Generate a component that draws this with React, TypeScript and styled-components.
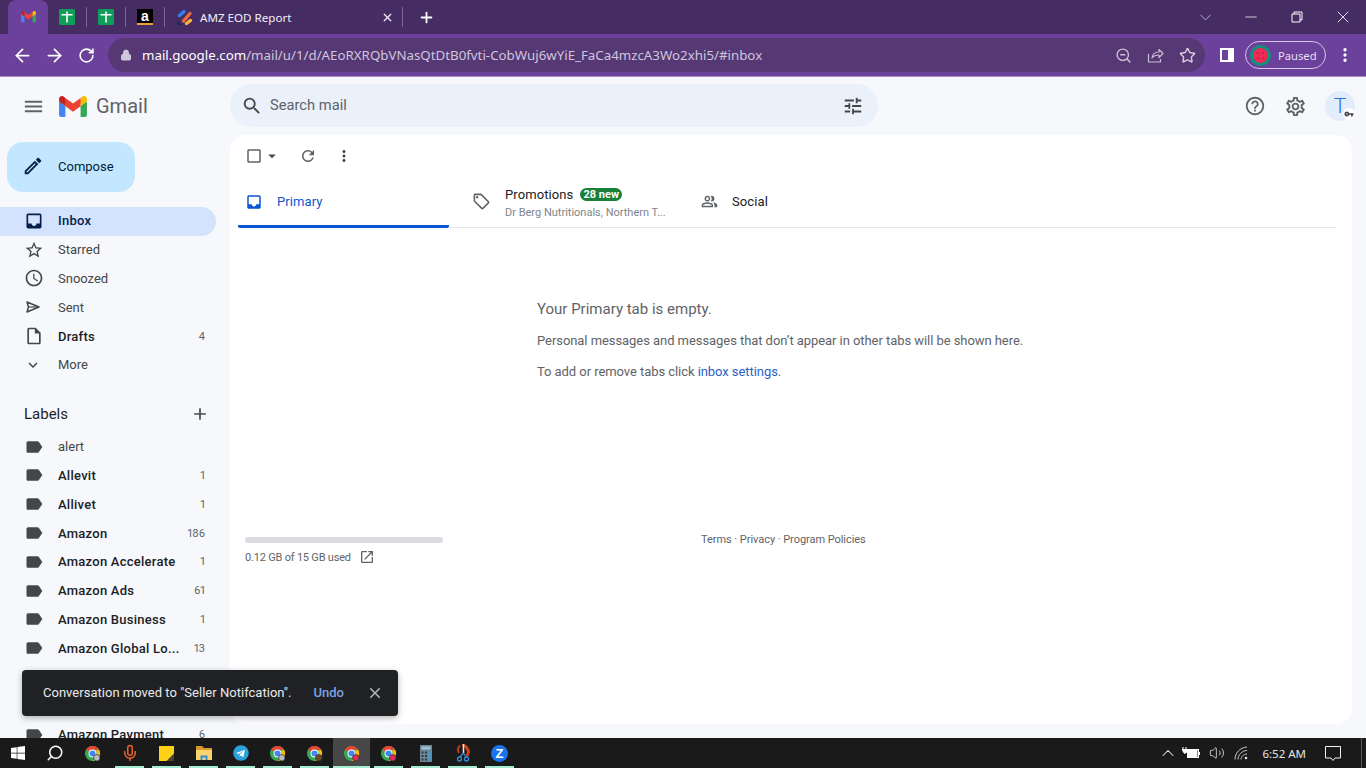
import React from 'react';
import styled, { createGlobalStyle } from 'styled-components';
import {
	MdMenu, MdSearch, MdTune, MdHelpOutline, MdOutlineSettings, MdOutlineEdit, MdInbox, MdOutlineStarBorder,
	MdAccessTime, MdOutlineInsertDriveFile, MdExpandMore, MdLabel, MdAdd, MdOutlineCheckBoxOutlineBlank,
	MdArrowDropDown, MdRefresh, MdMoreVert, MdOutlineLocalOffer, MdOutlinePeopleAlt, MdOpenInNew, MdClose, MdVpnKey,
} from 'react-icons/md';
import { FaWindows, FaTelegram } from 'react-icons/fa';
import {
	ArrowLeft, ArrowRight, RotateCw, Lock, ZoomOut, Star, ChevronDown, Minus, X, Plus, Search, Mic,
	ChevronUp, Volume2, EllipsisVertical,
} from 'lucide-react';

const GlobalStyle = createGlobalStyle`
	html, body { margin: 0; padding: 0; height: 100%; overflow: hidden; }
	* { box-sizing: border-box; }
	body { font-family: Roboto, "Liberation Sans", sans-serif; }
`;

const ZoomBadge = styled.div`
	width: 17px;
	height: 17px;
	border-radius: 50%;
	background: #1a73f0;
	color: #fff;
	font: 700 13px/17px "Liberation Sans", sans-serif;
	text-align: center;
`;

const TelegramBadge = styled.span`
	display: flex;
	border-radius: 50%;
	background: radial-gradient(circle, #fff 60%, transparent 62%);
`;

const GmailLogo = ({ size }: { size: number }) => (
	<svg width={size} height={size * 0.75} viewBox="0 0 256 193">
		<path fill="#4285F4" d="M58.182 192.05V93.14L27.507 65.077 0 49.504v125.091c0 9.658 7.825 17.455 17.455 17.455h40.727Z" />
		<path fill="#34A853" d="M197.818 192.05h40.727c9.659 0 17.455-7.826 17.455-17.455V49.505l-31.156 17.837-27.026 25.798v98.91Z" />
		<path fill="#EA4335" d="m58.182 93.14-4.174-38.647 4.174-36.989L128 69.868l69.818-52.364 4.669 34.992-4.669 40.644L128 145.504z" />
		<path fill="#FBBC04" d="M197.818 17.504V93.14L256 49.504V26.231c0-21.585-24.64-33.89-41.89-20.945l-16.292 12.218Z" />
		<path fill="#C5221F" d="M0 49.504l26.759 20.07L58.182 93.14V17.504L41.89 5.286C24.61-7.66 0 4.646 0 26.23v23.273Z" />
	</svg>
);

const SheetIcon = () => (
	<svg width="16" height="16" viewBox="0 0 16 16">
		<rect width="16" height="16" rx="1.5" fill="#0f9d58" />
		<path d="M7.200 2.500h1.600V5h4.700v1.400H8.800v7.100H7.200V6.400H2.500V5h4.700z" fill="#fff" />
	</svg>
);

const AmzIcon = () => (
	<svg width="17" height="17" viewBox="0 0 17 17" fill="none" strokeLinecap="round" strokeWidth="3.4">
		<path d="M3.500 6.500L8 2.500" stroke="#2f80ed" />
		<path d="M7.500 12L14 4.500" stroke="#ef6b3b" />
		<path d="M10.500 14.500L14.500 11.500" stroke="#f5b63f" />
		<path d="M1 11l5 5H1z" fill="#1e2a5a" />
	</svg>
);

const ShareIcon = () => (
	<svg width="17" height="17" viewBox="0 0 17 17" fill="none" stroke="#c9bfd6" strokeWidth="1.200">
		<path d="M1.500 7v8h12v-3" />
		<path d="M5 11c.5-4 3.500-6 7-6V2.500L16 6.500 12 10.500V8c-3 0-5.500 1-7 3z" strokeLinejoin="round" />
	</svg>
);

const ChromeIcon = ({ badge }: { badge?: string }) => (
	<svg width="17" height="17" viewBox="0 0 18 18">
		<circle cx="9" cy="9" r="8" fill="#34a853" />
		<path d="M9 1a8 8 0 0 1 7 4H9a4 4 0 0 0-3.600 2.200L2.200 5A8 8 0 0 1 9 1z" fill="#ea4335" />
		<path d="M16 5a8 8 0 0 1-6.600 12l3-5.200A4 4 0 0 0 12.400 6z" fill="#fbbc04" />
		<circle cx="9" cy="9" r="4.200" fill="#fff" />
		<circle cx="9" cy="9" r="3.200" fill="#4285f4" />
		{badge && <circle cx="13.500" cy="13.500" r="3.400" fill={badge} stroke="#333" strokeWidth="0.8" />}
	</svg>
);

const StickyIcon = () => (
	<svg width="15" height="15" viewBox="0 0 15 15">
		<path d="M0 0h15v15H0z" fill="#fcd116" />
		<path d="M15 7.500V15H7.500z" fill="#4c4230" />
	</svg>
);

const FolderIcon = () => (
	<svg width="18" height="16" viewBox="0 0 18 16">
		<path d="M1 1h6l2 2h8v3H1z" fill="#d9982a" />
		<path d="M1 5h16v10H1z" fill="#fcd36a" />
		<path d="M5.500 15v-4.500h7V15h-2v-2.500h-3V15z" fill="#2f8fdc" />
	</svg>
);

const CalcIcon = () => (
	<svg width="12" height="17" viewBox="0 0 12 17">
		<rect width="12" height="17" fill="#6e8595" />
		<rect x="1.500" y="1.500" width="9" height="3" fill="#9fc3d6" />
		<path d="M1.500 6.500h2v2h-2zM5 6.500h2v2H5zM1.500 10h2v2h-2zM5 10h2v2H5zM1.500 13.500h2v2h-2zM5 13.500h2v2H5z" fill="#2e3b44" />
		<rect x="8.500" y="6.500" width="2" height="9" fill="#3f9fdc" />
	</svg>
);

const ScissorsIcon = () => (
	<svg width="18" height="18" viewBox="0 0 18 18" fill="none">
		<path d="M8 1a7 7 0 0 1 5 11" stroke="#d23f1c" strokeWidth="3" />
		<path d="M6 1.500A6 6 0 0 0 5 9" stroke="#c23a1a" strokeWidth="2" />
		<path d="M9.500 0v9" stroke="#e8e8e8" strokeWidth="1.500" />
		<path d="M9.500 9L6 13M9.500 9L12 13" stroke="#2f8fdc" strokeWidth="1.200" />
		<circle cx="5.500" cy="15" r="2" stroke="#2f8fdc" strokeWidth="1.300" />
		<circle cx="12.500" cy="15" r="2" stroke="#2f8fdc" strokeWidth="1.300" />
	</svg>
);

const BatteryIcon = () => (
	<svg width="18" height="12" viewBox="0 0 18 12">
		<path d="M1 0v2M4 0v2M0 2.500h5v2.500L2.500 6.500z" stroke="#fff" strokeWidth="1" fill="#fff" />
		<rect x="5.500" y="2.500" width="11" height="8" fill="none" stroke="#fff" />
		<rect x="5.500" y="3" width="10" height="7" fill="#fff" />
		<rect x="17" y="5" width="1" height="3" fill="#fff" />
	</svg>
);

const WifiFanIcon = () => (
	<svg width="15" height="14" viewBox="0 0 15 14" fill="none" stroke="#c8c8c8" strokeWidth="1">
		<path d="M1 13.500C1 7 6 1.500 13 1" />
		<path d="M4 13.500C4 9 8 4.500 13 4.500" />
		<path d="M7 13.500C7 11 9.500 8 13 8" />
		<circle cx="12" cy="12" r="1.300" fill="#e6e6e6" stroke="none" />
	</svg>
);

const NotificationIcon = () => (
	<svg width="18" height="17" viewBox="0 0 18 17" fill="none" stroke="#f0f0f0" strokeWidth="1">
		<path d="M1.500 1.500h15v11.500h-5.500L9 15.500 7 13H1.500z" />
	</svg>
);

function SentIcon() {
	return (
		<svg width="18" height="18" viewBox="0 0 18 18">
			<path d="M3 4l12 5-12 5 1.500-5z" fill="none" stroke="#444746" strokeWidth="1.500" strokeLinejoin="round" />
			<path d="M4.500 9H15" stroke="#444746" strokeWidth="1.200" />
		</svg>
	);
}

const taskItems: { key: string; node: React.ReactNode; active?: boolean; idle?: boolean }[] = [
	{ key: 'chrome1', node: <ChromeIcon badge="#bbb" />, idle: true },
	{ key: 'mic', node: <Mic size={18} color="#e8622c" strokeWidth={2} /> },
	{ key: 'sticky', node: <StickyIcon /> },
	{ key: 'folder', node: <FolderIcon /> },
	{ key: 'telegram', node: <TelegramBadge><FaTelegram size={16} color="#2aa1da" /></TelegramBadge> },
	{ key: 'chrome2', node: <ChromeIcon badge="#bbb" /> },
	{ key: 'chrome3', node: <ChromeIcon badge="#6b4a2a" /> },
	{ key: 'chrome4', node: <ChromeIcon badge="#e8285a" />, active: true },
	{ key: 'chrome5', node: <ChromeIcon badge="#e8285a" /> },
	{ key: 'calc', node: <CalcIcon /> },
	{ key: 'scissors', node: <ScissorsIcon /> },
	{ key: 'zoom', node: <ZoomBadge>Z</ZoomBadge> },
];

const primaryNav = [
	{ name: 'Inbox', icon: <MdInbox size={20} color="#041e49" />, active: true, bold: true },
	{ name: 'Starred', icon: <MdOutlineStarBorder size={20} /> },
	{ name: 'Snoozed', icon: <MdAccessTime size={20} /> },
	{ name: 'Sent', icon: <SentIcon /> },
	{ name: 'Drafts', icon: <MdOutlineInsertDriveFile size={20} />, bold: true, count: '4' },
	{ name: 'More', icon: <MdExpandMore size={18} /> },
];

const labels = [
	{ name: 'alert' },
	{ name: 'Allevit', count: '1', bold: true },
	{ name: 'Allivet', count: '1', bold: true },
	{ name: 'Amazon', count: '186', bold: true },
	{ name: 'Amazon Accelerate', count: '1', bold: true },
	{ name: 'Amazon Ads', count: '61', bold: true },
	{ name: 'Amazon Business', count: '1', bold: true },
	{ name: 'Amazon Global Lo...', count: '13', bold: true },
];

const App = () => (
	<>
		<GlobalStyle />
		<ScWindow>
			<ScTabStrip>
				<ScActiveTab><GmailLogo size={15} /></ScActiveTab>
				<ScPinnedTab $width={38}><SheetIcon /></ScPinnedTab>
				<ScPinnedTab $divider><SheetIcon /></ScPinnedTab>
				<ScPinnedTab $divider>
					<ScAmazonFav>a</ScAmazonFav>
				</ScPinnedTab>
				<ScTitleTab>
					<AmzIcon />
					<ScTabTitle>AMZ EOD Report</ScTabTitle>
					<X size={13} color="#e8e0f0" strokeWidth={2.5} />
				</ScTitleTab>
				<ScNewTab><Plus size={17} color="#fff" strokeWidth={2.5} /></ScNewTab>
				<ScWindowControls>
					<ScWindowButton><ChevronDown size={19} color="#d9d0e4" strokeWidth={1} /></ScWindowButton>
					<ScWindowButton><Minus size={18} color="#fff" strokeWidth={1} /></ScWindowButton>
					<ScWindowButton>
						<svg width="12" height="12" viewBox="0 0 12 12">
							<path d="M3 3V1h8v8H9M1 3h8v8H1z" fill="none" stroke="#fff" strokeWidth="1" />
						</svg>
					</ScWindowButton>
					<ScWindowButton><X size={20} color="#fff" strokeWidth={1} /></ScWindowButton>
				</ScWindowControls>
			</ScTabStrip>

			<ScToolbar>
				<ScNavButton><ArrowLeft size={21} color="#fff" strokeWidth={2} /></ScNavButton>
				<ScNavButton><ArrowRight size={21} color="#fff" strokeWidth={2} /></ScNavButton>
				<ScNavButton><RotateCw size={17} color="#fff" strokeWidth={2.25} /></ScNavButton>
				<ScUrlBar>
					<Lock size={12} color="#cfc6da" fill="#cfc6da" />
					<ScUrl>
						<ScDomain>mail.google.com</ScDomain>/mail/u/1/d/AEoRXRQbVNasQtDtB0fvti-CobWuj6wYiE_FaCa4mzcA3Wo2xhi5/#inbox
					</ScUrl>
					<ScUrlActions>
						<ZoomOut size={17} color="#c9bfd6" />
						<ShareIcon />
						<Star size={17} color="#d8d0e2" />
					</ScUrlActions>
				</ScUrlBar>
				<ScSidePanel>
					<svg width="14" height="14" viewBox="0 0 14 14">
						<path d="M0 0h14v14H0zM2 2v10h6V2z" fill="#fff" fillRule="evenodd" />
					</svg>
				</ScSidePanel>
				<ScPausedPill>
					<svg width="21" height="21" viewBox="0 0 24 24">
						<circle cx="12" cy="12" r="12" fill="#12907c" />
						<circle cx="12" cy="12" r="8.500" fill="#ee2b54" />
						<circle cx="9" cy="9" r="0.800" fill="#8d1533" />
						<circle cx="15" cy="9" r="0.800" fill="#8d1533" />
						<circle cx="9" cy="15" r="0.800" fill="#8d1533" />
						<circle cx="15" cy="15" r="0.800" fill="#8d1533" />
					</svg>
					<ScPausedText>Paused</ScPausedText>
				</ScPausedPill>
				<ScMenuDots><EllipsisVertical size={18} color="#fff" strokeWidth={2.5} /></ScMenuDots>
			</ScToolbar>

			<ScGmail>
				<ScGmailHeader>
					<ScBrand>
						<MdMenu size={23} color="#5f6368" />
						<GmailLogo size={28} />
						<ScBrandName>Gmail</ScBrandName>
					</ScBrand>
					<ScSearch>
						<MdSearch size={22} color="#444746" />
						<ScSearchText>Search mail</ScSearchText>
						<MdTune size={22} color="#444746" />
					</ScSearch>
					<ScHeaderActions>
						<MdHelpOutline size={22} color="#5f6368" />
						<MdOutlineSettings size={23} color="#5f6368" />
						<ScAvatar>
							T
							<ScKeyBadge><MdVpnKey size={10} color="#444" /></ScKeyBadge>
						</ScAvatar>
					</ScHeaderActions>
				</ScGmailHeader>

				<ScBody>
					<ScSidebar>
						<ScCompose>
							<MdOutlineEdit size={22} color="#041e49" />
							<span>Compose</span>
						</ScCompose>
						<ScNav>
							{primaryNav.map(item => (
								<ScRow key={item.name} $active={item.active} $bold={item.bold}>
									<ScRowIcon>{item.icon}</ScRowIcon>
									<ScRowLabel>{item.name}</ScRowLabel>
									{item.count && <ScRowCount>{item.count}</ScRowCount>}
								</ScRow>
							))}
						</ScNav>
						<ScLabelsHeader>
							<span>Labels</span>
							<MdAdd size={20} color="#444746" />
						</ScLabelsHeader>
						<ScLabelList>
							{labels.map(item => (
								<ScRow key={item.name} $bold={item.bold}>
									<ScRowIcon><MdLabel size={20} color="#444746" /></ScRowIcon>
									<ScRowLabel>{item.name}</ScRowLabel>
									{item.count && <ScRowCount>{item.count}</ScRowCount>}
								</ScRow>
							))}
							<ScCoveredRows />
							<ScRow $bold>
								<ScRowIcon><MdLabel size={20} color="#444746" /></ScRowIcon>
								<ScRowLabel>Amazon Payment</ScRowLabel>
								<ScRowCount>6</ScRowCount>
							</ScRow>
						</ScLabelList>
					</ScSidebar>

					<ScMain>
						<ScMailToolbar>
							<ScCheckGroup>
								<MdOutlineCheckBoxOutlineBlank size={18} color="#5f6368" />
								<MdArrowDropDown size={18} color="#444746" />
							</ScCheckGroup>
							<MdRefresh size={18} color="#5f6368" />
							<MdMoreVert size={18} color="#444746" />
						</ScMailToolbar>
						<ScTabs>
							<ScTab $active $width={211} $pad={7}>
								<MdInbox size={18} color="#0b57d0" />
								<ScTabName $active>Primary</ScTabName>
							</ScTab>
							<ScTab $width={237} $pad={23}>
								<MdOutlineLocalOffer size={19} color="#5f6368" />
								<ScTabStack>
									<ScTabHead>
										<ScTabName>Promotions</ScTabName>
										<ScNewBadge>28 new</ScNewBadge>
									</ScTabHead>
									<ScTabSub>Dr Berg Nutritionals, Northern T...</ScTabSub>
								</ScTabStack>
							</ScTab>
							<ScTab $width={237} $pad={15}>
								<MdOutlinePeopleAlt size={17} color="#5f6368" />
								<ScTabName>Social</ScTabName>
							</ScTab>
						</ScTabs>
						<ScEmpty>
							<ScEmptyTitle>Your Primary tab is empty.</ScEmptyTitle>
							<ScEmptyText>Personal messages and messages that don’t appear in other tabs will be shown here.</ScEmptyText>
							<ScEmptyText>To add or remove tabs click <ScLink>inbox settings</ScLink>.</ScEmptyText>
						</ScEmpty>
						<ScFooter>
							<ScStorage>
								<ScStorageBar />
								<ScStorageText>
									0.12 GB of 15 GB used
									<MdOpenInNew size={16} color="#5f6368" />
								</ScStorageText>
							</ScStorage>
							<ScPolicies>Terms · Privacy · Program Policies</ScPolicies>
						</ScFooter>
					</ScMain>
				</ScBody>

				<ScToast>
					<ScToastText>Conversation moved to "Seller Notifcation".</ScToastText>
					<ScUndo>Undo</ScUndo>
					<MdClose size={18} color="#b4b6b9" />
				</ScToast>
			</ScGmail>

			<ScTaskbar>
				<ScStart><FaWindows size={16} color="#fff" /></ScStart>
				<ScTaskSearch><Search size={18} color="#fff" strokeWidth={2} /></ScTaskSearch>
				{taskItems.map(item => (
					<ScTaskItem key={item.key} $active={item.active} $idle={item.idle}>{item.node}</ScTaskItem>
				))}
				<ScTray>
					<ScCaret><ChevronUp size={20} color="#e6e6e6" strokeWidth={1.25} /></ScCaret>
					<BatteryIcon />
					<Volume2 size={16} color="#e6e6e6" strokeWidth={1.25} />
					<WifiFanIcon />
					<ScClock>6:52 AM</ScClock>
					<NotificationIcon />
					<ScDesktopEdge />
				</ScTray>
			</ScTaskbar>
		</ScWindow>
	</>
);

export default App;

const ScWindow = styled.div`
	width: 1366px;
	height: 768px;
	display: flex;
	flex-direction: column;
	overflow: hidden;
`;

const ScTabStrip = styled.div`
	height: 34px;
	flex: none;
	background: #452c63;
	display: flex;
	align-items: center;
	padding-left: 8px;
`;

const ScActiveTab = styled.div`
	width: 40px;
	height: 34px;
	align-self: flex-end;
	background: #6b419c;
	border-radius: 8px 8px 0 0;
	display: flex;
	align-items: center;
	justify-content: center;
`;

const ScPinnedTab = styled.div<{ $divider?: boolean; $width?: number }>`
	width: ${props => props.$width || 39}px;
	height: 20px;
	display: flex;
	align-items: center;
	justify-content: center;
	border-left: ${props => props.$divider ? '1px solid #7d6796' : 'none'};
`;

const ScAmazonFav = styled.div`
	width: 16px;
	height: 16px;
	background: #000;
	color: #fff;
	font: 700 14px/14px "Liberation Sans", sans-serif;
	text-align: center;
	border-bottom: 2px solid #f19e39;
`;

const ScTitleTab = styled.div`
	width: 239px;
	height: 20px;
	display: flex;
	align-items: center;
	padding: 0 8px 0 11px;
	border-left: 1px solid #7d6796;
	border-right: 1px solid #7d6796;
`;

const ScTabTitle = styled.span`
	flex: 1;
	margin-left: 7px;
	color: #f4eff8;
	font: 11.6px "Noto Sans", "Open Sans", sans-serif;
`;

const ScNewTab = styled.div`
	width: 46px;
	display: flex;
	justify-content: center;
`;

const ScWindowControls = styled.div`
	margin-left: auto;
	display: flex;
`;

const ScWindowButton = styled.div`
	width: 46px;
	height: 34px;
	display: flex;
	align-items: center;
	justify-content: center;
`;

const ScToolbar = styled.div`
	height: 43px;
	flex: none;
	background: #6b419c;
	border-bottom: 1px solid #a48bc4;
	display: flex;
	align-items: center;
	padding: 0 10px 0 6px;
`;

const ScNavButton = styled.div`
	width: 32px;
	height: 32px;
	display: flex;
	align-items: center;
	justify-content: center;
`;

const ScUrlBar = styled.div`
	width: 1097px;
	height: 34px;
	margin-left: 6px;
	border-radius: 17px;
	background: #553874;
	display: flex;
	align-items: center;
	padding: 0 9px 0 12px;
`;

const ScUrl = styled.div`
	flex: 1;
	margin-left: 10px;
	color: #d0c6dc;
	font: 13.3px "Noto Sans", "Open Sans", sans-serif;
	white-space: nowrap;
`;

const ScDomain = styled.span`
	color: #fff;
`;

const ScUrlActions = styled.div`
	display: flex;
	align-items: center;
	gap: 15px;
`;

const ScSidePanel = styled.div`
	width: 44px;
	display: flex;
	justify-content: center;
`;

const ScPausedPill = styled.div`
	width: 81px;
	height: 28px;
	margin-left: -4px;
	border: 1px solid #d4c8e6;
	border-radius: 14px;
	display: flex;
	align-items: center;
	padding-left: 4px;
`;

const ScPausedText = styled.span`
	margin-left: 7px;
	color: #e6dff0;
	font: 11.2px "Noto Sans", "Open Sans", sans-serif;
`;

const ScMenuDots = styled.div`
	margin-left: 10px;
	display: flex;
`;

const ScGmail = styled.div`
	flex: 1;
	min-height: 0;
	background: #f6f8fc;
	position: relative;
	display: flex;
	flex-direction: column;
`;

const ScGmailHeader = styled.header`
	height: 58px;
	flex: none;
	display: flex;
	align-items: center;
`;

const ScBrand = styled.div`
	width: 230px;
	flex: none;
	display: flex;
	align-items: center;
	padding-left: 22px;
	gap: 14px;
`;

const ScBrandName = styled.span`
	margin-left: -5px;
	color: #5f6368;
	font-size: 20px;
`;

const ScSearch = styled.div`
	width: 648px;
	height: 43px;
	margin-top: -1px;
	background: #eaf1fb;
	border-radius: 22px;
	display: flex;
	align-items: center;
	padding: 0 14px 0 11px;
`;

const ScSearchText = styled.span`
	flex: 1;
	margin-left: 7px;
	padding-bottom: 1px;
	color: #5f6368;
	font-size: 14.7px;
`;

const ScHeaderActions = styled.div`
	margin-left: auto;
	display: flex;
	align-items: center;
	gap: 18px;
	padding-right: 11px;
`;

const ScAvatar = styled.div`
	width: 30px;
	height: 30px;
	border-radius: 50%;
	background: #e3ecfb;
	color: #2a6fe0;
	font-size: 21px;
	font-weight: 300;
	display: flex;
	align-items: center;
	justify-content: center;
	position: relative;
`;

const ScKeyBadge = styled.div`
	position: absolute;
	right: 0;
	bottom: 1px;
	width: 12px;
	height: 12px;
	border-radius: 50%;
	background: #fff;
	display: flex;
	align-items: center;
	justify-content: center;
`;

const ScBody = styled.div`
	flex: 1;
	min-height: 0;
	display: flex;
`;

const ScSidebar = styled.aside`
	width: 230px;
	flex: none;
	overflow: hidden;
	padding-top: 7px;
`;

const ScCompose = styled.div`
	width: 128px;
	height: 50px;
	margin-left: 7px;
	padding: 0 0 2px 15px;
	background: #c2e7ff;
	border-radius: 16px;
	display: flex;
	align-items: center;
	gap: 14px;
	color: #001d35;
	font-size: 13px;
`;

const ScNav = styled.nav`
	margin-top: 15px;
`;

const ScLabelList = styled.nav`
	margin-top: 4px;
`;

const ScRow = styled.div<{ $active?: boolean; $bold?: boolean }>`
	width: 216px;
	height: 28.8px;
	display: flex;
	align-items: center;
	padding: 0 11px 1px 24px;
	border-radius: 0 15px 15px 0;
	background: ${props => props.$active ? '#d3e3fd' : 'transparent'};
	color: ${props => props.$active ? '#041e49' : props.$bold ? '#202124' : '#444746'};
	font-size: 13px;
	font-weight: ${props => props.$bold ? 500 : 400};
	letter-spacing: ${props => props.$bold ? '0.25px' : '0'};
`;

const ScRowIcon = styled.span`
	width: 34px;
	flex: none;
	display: flex;
	color: #444746;
`;

const ScRowLabel = styled.span`
	flex: 1;
	white-space: nowrap;
`;

const ScRowCount = styled.span`
	color: #5f6368;
	font-size: 11px;
	font-weight: 400;
	letter-spacing: 0;
	font-feature-settings: "pnum";
`;

const ScCoveredRows = styled.div`
	height: 57.6px;
`;

const ScLabelsHeader = styled.div`
	width: 216px;
	height: 29px;
	margin-top: 20px;
	display: flex;
	align-items: center;
	justify-content: space-between;
	padding: 0 6px 0 24px;
	color: #1f1f1f;
	font-size: 15px;
`;

const ScMain = styled.main`
	flex: 1;
	min-width: 0;
	margin: 0 14px 14px 0;
	background: #fff;
	border-radius: 16px;
	display: flex;
	flex-direction: column;
	padding: 0 15px 0 8px;
`;

const ScMailToolbar = styled.div`
	height: 42px;
	flex: none;
	display: flex;
	align-items: center;
	padding-left: 7px;
	gap: 18px;
`;

const ScCheckGroup = styled.div`
	display: flex;
	align-items: center;
`;

const ScTabs = styled.div`
	height: 51px;
	flex: none;
	display: flex;
	align-items: flex-end;
	border-bottom: 1px solid #e6e8eb;
`;

const ScTab = styled.div<{ $active?: boolean; $width: number; $pad: number }>`
	width: ${props => props.$width}px;
	height: 50px;
	margin-bottom: -1px;
	display: flex;
	align-items: center;
	gap: 14px;
	padding-left: ${props => props.$pad}px;
	border-bottom: 3px solid ${props => props.$active ? '#0b57d0' : 'transparent'};
	border-radius: 0 0 2px 2px;
`;

const ScTabName = styled.span<{ $active?: boolean }>`
	color: ${props => props.$active ? '#0b57d0' : '#202124'};
	font-size: 13px;
	letter-spacing: 0.1px;
`;

const ScTabStack = styled.div`
	display: flex;
	flex-direction: column;
	gap: 4px;
	padding-top: 2px;
`;

const ScTabHead = styled.div`
	display: flex;
	align-items: center;
	gap: 7px;
`;

const ScNewBadge = styled.span`
	background: #188038;
	color: #fff;
	font-size: 11px;
	font-weight: 700;
	line-height: 13px;
	padding: 0 3px;
	border-radius: 7px;
`;

const ScTabSub = styled.span`
	color: #80868b;
	font-size: 11px;
	white-space: nowrap;
`;

const ScEmpty = styled.div`
	padding: 71px 0 0 299px;
	height: 309px;
	flex: none;
	display: flex;
	flex-direction: column;
`;

const ScEmptyTitle = styled.div`
	color: #5f6368;
	font-size: 15px;
	line-height: 20px;
	margin-bottom: 12px;
`;

const ScEmptyText = styled.div`
	color: #5f6368;
	font-size: 13px;
	line-height: 20px;
	margin-bottom: 11px;
	letter-spacing: -0.06px;
`;

const ScLink = styled.span`
	color: #2a62c8;
`;

const ScFooter = styled.div`
	display: flex;
	padding-left: 7px;
`;

const ScStorage = styled.div`
	width: 198px;
	flex: none;
`;

const ScStorageBar = styled.div`
	height: 6px;
	border-radius: 3px;
	background: #dadce0;
`;

const ScStorageText = styled.div`
	margin-top: 6px;
	display: flex;
	align-items: center;
	gap: 8px;
	color: #5f6368;
	font-size: 11px;
	letter-spacing: -0.2px;
`;

const ScPolicies = styled.div`
	margin-left: 258px;
	margin-top: -4px;
	color: #5f6368;
	font-size: 11px;
	letter-spacing: -0.05px;
`;

const ScToast = styled.div`
	position: absolute;
	left: 22px;
	top: 593px;
	width: 376px;
	height: 46px;
	background: #202124;
	border-radius: 4px;
	box-shadow: 0 2px 6px rgba(0, 0, 0, 0.3);
	display: flex;
	align-items: center;
	padding: 0 14px 0 21px;
`;

const ScToastText = styled.span`
	flex: 1;
	color: #e8eaed;
	font-size: 13px;
	padding-bottom: 2px;
	letter-spacing: 0.02px;
`;

const ScUndo = styled.span`
	margin-right: 22px;
	padding-bottom: 2px;
	color: #7ba3e0;
	font-size: 13px;
	font-weight: 500;
`;

const ScTaskbar = styled.footer`
	height: 30px;
	flex: none;
	background: #1a1a1a;
	display: flex;
	align-items: stretch;
`;

const ScStart = styled.div`
	width: 35px;
	display: flex;
	align-items: center;
	justify-content: center;
`;

const ScTaskSearch = styled.div`
	width: 39px;
	display: flex;
	align-items: center;
	justify-content: center;
	svg {
		transform: scaleX(-1);
	}
`;

const ScTaskItem = styled.div<{ $active?: boolean; $idle?: boolean }>`
	width: 37px;
	display: flex;
	align-items: center;
	justify-content: center;
	background: ${props => props.$active ? '#474747' : 'transparent'};
	position: relative;
	&::after {
		content: '';
		display: ${props => props.$idle ? 'none' : 'block'};
		position: absolute;
		left: ${props => props.$active ? 0 : 4}px;
		right: ${props => props.$active ? 0 : 4}px;
		bottom: 0;
		height: 2px;
		background: #a6ecd0;
	}
`;

const ScTray = styled.div`
	margin-left: auto;
	display: flex;
	align-items: center;
	gap: 9px;
	padding-right: 4px;
`;

const ScCaret = styled.span`
	display: flex;
	margin-right: -5px;
`;

const ScClock = styled.span`
	margin: 0 9px 0 4px;
	color: #e6e6e6;
	font: 11.5px "Noto Sans", "Open Sans", sans-serif;
`;

const ScDesktopEdge = styled.div`
	align-self: stretch;
	width: 1px;
	margin-left: 10px;
	background: #5a5a5a;
`;
